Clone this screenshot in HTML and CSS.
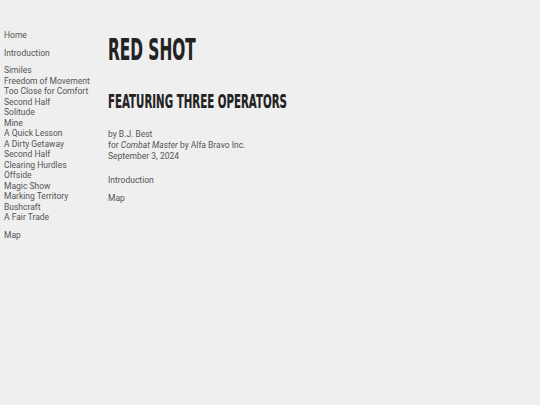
FILE: index.html
```html
<!DOCTYPE html>
<html>
<head>
<meta charset="utf-8">
<link rel="stylesheet" href="styles.css">
</head>
<body>
<div class="page">
  <nav class="side">
    <ul class="group">
      <li><a href="#">Home</a></li>
    </ul>
    <ul class="group">
      <li><a href="#">Introduction</a></li>
    </ul>
    <ul class="group">
      <li><a href="#">Similes</a></li>
      <li><a href="#">Freedom of Movement</a></li>
      <li><a href="#">Too Close for Comfort</a></li>
      <li><a href="#">Second Half</a></li>
      <li><a href="#">Solitude</a></li>
      <li><a href="#">Mine</a></li>
      <li><a href="#">A Quick Lesson</a></li>
      <li><a href="#">A Dirty Getaway</a></li>
      <li><a href="#">Second Half</a></li>
      <li><a href="#">Clearing Hurdles</a></li>
      <li><a href="#">Offside</a></li>
      <li><a href="#">Magic Show</a></li>
      <li><a href="#">Marking Territory</a></li>
      <li><a href="#">Bushcraft</a></li>
      <li><a href="#">A Fair Trade</a></li>
    </ul>
    <ul class="group">
      <li><a href="#">Map</a></li>
    </ul>
  </nav>
  <main class="main">
    <h1 class="title">Red Shot</h1>
    <h2 class="subtitle">Featuring Three Operators</h2>
    <p class="byline">by B.J. Best<br>for <em>Combat Master</em> by Alfa Bravo Inc.<br>September 3, 2024</p>
    <p class="link"><a href="#">Introduction</a></p>
    <p class="link"><a href="#">Map</a></p>
  </main>
</div>
</body>
</html>
```
FILE: styles.css
```css
html, body {
  margin: 0;
  padding: 0;
  background: #efefef;
}
body {
  font-family: Roboto, "Liberation Sans", sans-serif;
  font-size: 8.5px;
  color: #555;
}
a {
  color: #555;
  text-decoration: none;
}
.page {
  display: flex;
  padding: 30px 0 0 4px;
}
.side {
  width: 104px;
  flex: none;
}
.group {
  list-style: none;
  margin: 0 0 7px 0;
  padding: 0;
  line-height: 10.5px;
}
.main {
  padding-top: 2px;
}
.title, .subtitle {
  font-family: "DejaVu Sans Condensed", "DejaVu Sans", sans-serif;
  font-weight: bold;
  text-transform: uppercase;
  color: #222;
  margin: 0;
  transform-origin: left center;
  -webkit-text-stroke: 0.2px #222;
}
.title {
  font-size: 31px;
  line-height: 34px;
  transform: scaleX(0.55);
}
.subtitle {
  font-size: 19px;
  line-height: 22px;
  margin-top: 24px;
  transform: scaleX(0.6);
}
.byline {
  margin: 17px 0 0 0;
  line-height: 11px;
}
.link {
  margin: 13px 0 0 0;
  line-height: 11px;
}
.link + .link {
  margin-top: 7px;
}
```
